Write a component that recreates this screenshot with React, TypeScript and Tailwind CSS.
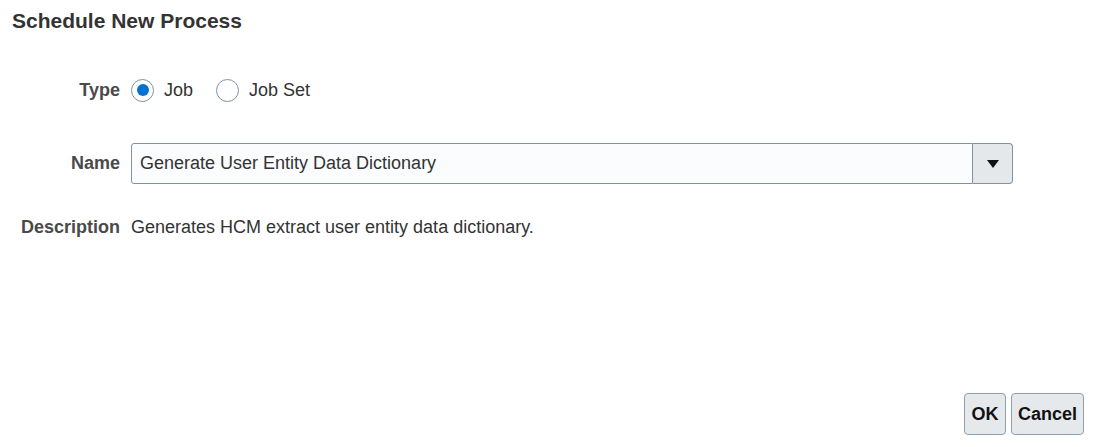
import { useState } from 'react';

const font = { fontFamily: '"Liberation Sans", Arial, sans-serif' };

export default function App() {
  const [type, setType] = useState<'job' | 'jobset'>('job');

  return (
    <div className="relative h-[447px] w-[1097px] bg-white text-[#333333]" style={font}>
      <div className="px-[12px] pt-[9px]">
        <h1 className="text-[21px] font-bold leading-[24px] text-[#333333]">Schedule New Process</h1>
      </div>

      {/* ── Formulaire ── */}
      <div className="mt-[45px] flex flex-col">
        {/* Type */}
        <div className="flex h-[24px] items-center">
          <span className="w-[120px] shrink-0 text-right text-[18px] font-bold text-[#4a4a4a]">Type</span>
          <div className="ml-[11px] flex items-center">
            <Radio label="Job" checked={type === 'job'} onClick={() => setType('job')} />
            <div className="w-[23px]" />
            <Radio label="Job Set" checked={type === 'jobset'} onClick={() => setType('jobset')} />
          </div>
        </div>

        {/* Name */}
        <div className="mt-[41px] flex h-[41px] items-center">
          <span className="w-[120px] shrink-0 text-right text-[18px] font-bold text-[#4a4a4a]">Name</span>
          <div className="ml-[11px] flex h-[41px]">
            <div className="flex w-[842px] items-center rounded-l-[3px] border border-[#7f92a3] bg-[#fafcfe] pl-[8px] text-[18px] text-[#333333]">
              Generate User Entity Data Dictionary
            </div>
            <button
              type="button"
              className="flex w-[40px] items-center justify-center rounded-r-[4px] border border-l-0 border-[#7f92a3] bg-[#e4e8ea]"
            >
              <svg width="12" height="8" viewBox="0 0 12 8">
                <path d="M0 0h12L6 8z" fill="#111111" />
              </svg>
            </button>
          </div>
        </div>

        {/* Description */}
        <div className="mt-[32px] flex h-[22px] items-center">
          <span className="w-[120px] shrink-0 text-right text-[18px] font-bold text-[#4a4a4a]">Description</span>
          <span className="ml-[11px] text-[18px] text-[#333333]">Generates HCM extract user entity data dictionary.</span>
        </div>
      </div>

      {/* ── Boutons ── */}
      <div className="absolute left-[964px] top-[393px] flex gap-[5px]">
        <button
          type="button"
          className="h-[42px] w-[42px] rounded-[4px] border border-[#8fa0ae] bg-[#e6e9ec] text-[18px] font-bold text-[#111111]"
        >
          OK
        </button>
        <button
          type="button"
          className="h-[42px] w-[73px] rounded-[4px] border border-[#8fa0ae] bg-[#e6e9ec] text-[18px] font-bold text-[#111111]"
        >
          Cancel
        </button>
      </div>
    </div>
  );
}

function Radio({ label, checked, onClick }: { label: string; checked: boolean; onClick: () => void }) {
  return (
    <button type="button" onClick={onClick} className="flex items-center">
      <span className="flex h-[23px] w-[23px] items-center justify-center rounded-full border border-[#7f92a3] bg-white">
        {checked && <span className="h-[12px] w-[12px] rounded-full bg-[#0572ce]" />}
      </span>
      <span className="ml-[10px] text-[18px] text-[#333333]">{label}</span>
    </button>
  );
}
